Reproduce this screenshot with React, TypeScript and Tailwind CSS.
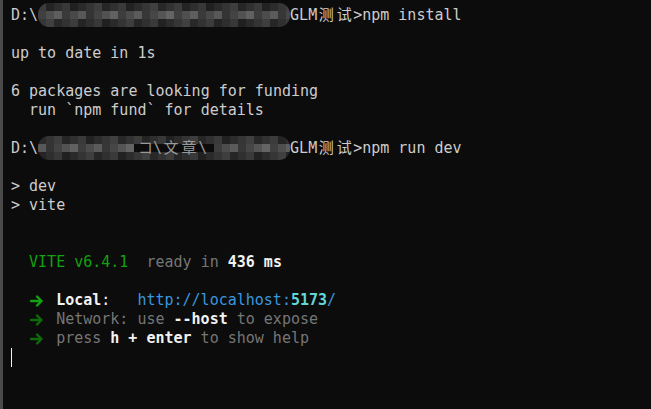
const mono = { fontFamily: '"DejaVu Sans Mono", "Liberation Mono", "Noto Sans CJK SC", monospace' };

function Wide({ c }: { c: string }) {
  // CJK chars take two cells in the terminal
  return (
    <span className="relative -top-[2px] inline-block w-[18px] h-[19px] align-top text-center leading-[19px]" style={{ fontFamily: '"Noto Sans CJK SC", sans-serif' }}>
      {c}
    </span>
  );
}

function Line({ children }: { children?: React.ReactNode }) {
  return <div className="h-[19px] overflow-visible">{children ?? " "}</div>;
}

function Mosaic({ seed, gap }: { seed: number; gap?: [number, number] }) {
  const cols = 32;
  const rows = 3;
  const cells = [];
  for (let r = 0; r < rows; r++) {
    for (let i = 0; i < cols; i++) {
      const x = i * 8;
      if (gap && r === 1 && x >= gap[0] && x < gap[1]) continue;
      const v = (i * 73 + r * 41 + seed * 31) % 17;
      const base = r === 1 ? 0x34 : 0x20;
      const g = base + v * (r === 1 ? 3 : 2);
      const hex = g.toString(16).padStart(2, "0");
      cells.push(<rect key={r + "-" + i} x={x} y={r * 8} width={8} height={8} fill={`#${hex}${hex}${hex}`} />);
    }
  }
  return (
    <svg width="252" height="24" viewBox="0 0 252 24" className="absolute left-0 -top-[3px]">
      <defs>
        <clipPath id={"blob" + seed}>
          <rect x="0" y="0" width="252" height="24" rx="11" />
        </clipPath>
      </defs>
      <g clipPath={`url(#blob${seed})`}>{cells}</g>
    </svg>
  );
}

function Redacted({ seed, children, gap }: { seed: number; children?: React.ReactNode; gap?: [number, number] }) {
  return (
    <span className="relative inline-block w-[252px] h-[19px] align-top">
      <Mosaic seed={seed} gap={gap} />
      {children}
    </span>
  );
}

function Arrow({ color }: { color: string }) {
  return (
    <span className="inline-block w-[9px] h-[19px] align-top relative">
      <svg width="14" height="19" viewBox="0 0 14 19" className="absolute left-[1px] top-0">
        <path d="M1 10h10M7 5.5l4.5 4.5L7 14.5" stroke={color} strokeWidth="2.4" fill="none" strokeLinecap="round" strokeLinejoin="round" />
      </svg>
    </span>
  );
}

export default function App() {
  const gray = "text-[#767676]";
  const white = "font-bold text-[#f2f2f2]";
  return (
    <div className="w-[651px] h-[409px] overflow-hidden bg-[#0c0c0c] border-l-[3px] border-[#4a4a4a] pl-[8px] pt-[6px] text-[15px] leading-[19px] text-[#cccccc] whitespace-pre" style={mono}>
      <Line>
        D:\<Redacted seed={1} />
        GLM<Wide c="测" /><Wide c="试" />&gt;npm install
      </Line>
      <Line />
      <Line>up to date in 1s</Line>
      <Line />
      <Line>6 packages are looking for funding</Line>
      <Line>  run `npm fund` for details</Line>
      <Line />
      <Line>
        D:\
        <Redacted seed={4} gap={[96, 176]}>
          <span className="absolute left-[100px] top-0 text-[#9a9a9a]">
            コ\<Wide c="文" /><Wide c="章" />\
          </span>
        </Redacted>
        GLM<Wide c="测" /><Wide c="试" />&gt;npm run dev
      </Line>
      <Line />
      <Line>&gt; dev</Line>
      <Line>&gt; vite</Line>
      <Line />
      <Line />
      <Line>
        {"  "}
        <span className="text-[#13a10e]">VITE v6.4.1</span>
        {"  "}
        <span className={gray}>ready in </span>
        <span className={white}>436</span>
        <span className={white}> ms</span>
      </Line>
      <Line />
      <Line>
        {"  "}
        <Arrow color="#13a10e" />
        {"  "}
        <span className={white}>Local</span>
        <span className="text-[#f2f2f2]">:</span>
        {"   "}
        <span className="text-[#3a96dd]">http://localhost:</span>
        <span className="font-bold text-[#61d6d6]">5173</span>
        <span className="text-[#3a96dd]">/</span>
      </Line>
      <Line>
        {"  "}
        <Arrow color="#0e6a0b" />
        {"  "}
        <span className={gray}>Network: use </span>
        <span className={white}>--host</span>
        <span className={gray}> to expose</span>
      </Line>
      <Line>
        {"  "}
        <Arrow color="#0e6a0b" />
        {"  "}
        <span className={gray}>press </span>
        <span className={white}>h + enter</span>
        <span className={gray}> to show help</span>
      </Line>
      <div className="h-[19px] flex items-stretch">
        <span className="w-px bg-[#f2f2f2]" />
      </div>
    </div>
  );
}
